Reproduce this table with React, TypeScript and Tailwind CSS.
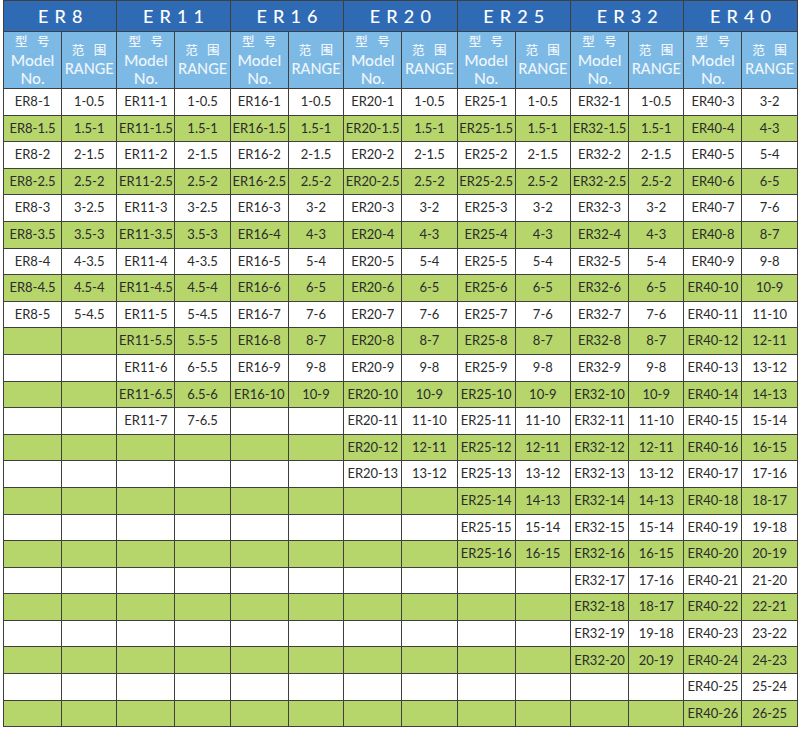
import React from "react";

// Collet groups and their nominal sizes
type Group = { name: string; sizes: number[]; fineStep: boolean };

const range = (from: number, to: number) =>
  Array.from({ length: to - from + 1 }, (_, i) => from + i);

const GROUPS: Group[] = [
  { name: "ER8", sizes: [1, 1.5, 2, 2.5, 3, 3.5, 4, 4.5, 5], fineStep: true },
  { name: "ER11", sizes: [1, 1.5, 2, 2.5, 3, 3.5, 4, 4.5, 5, 5.5, 6, 6.5, 7], fineStep: true },
  { name: "ER16", sizes: [1, 1.5, 2, 2.5, ...range(3, 10)], fineStep: false },
  { name: "ER20", sizes: [1, 1.5, 2, 2.5, ...range(3, 13)], fineStep: false },
  { name: "ER25", sizes: [1, 1.5, 2, 2.5, ...range(3, 16)], fineStep: false },
  { name: "ER32", sizes: [1, 1.5, 2, 2.5, ...range(3, 20)], fineStep: false },
  { name: "ER40", sizes: range(3, 26), fineStep: false },
];

const ROWS = 24;

function lower(size: number, fineStep: boolean) {
  if (fineStep || size < 3) return size - 0.5;
  return size - 1;
}

const border = "border border-[#3f3f3f]";

export default function App() {
  return (
    <div className="h-[729px] w-[800px] bg-white pl-[3px] font-['Lato','Noto_Sans_CJK_SC',sans-serif]">
      <table className="w-[794px] table-fixed border-collapse text-center">
        <colgroup>
          {GROUPS.map((g) => (
            <React.Fragment key={g.name}>
              <col className="w-[58px]" />
              <col className="w-[55.4px]" />
            </React.Fragment>
          ))}
        </colgroup>
        <thead>
          <tr className="h-[31px] bg-[#2f6bb5]">
            {GROUPS.map((g) => (
              <th
                key={g.name}
                colSpan={2}
                className={`${border} pl-[6px] text-[18px] font-medium tracking-[0.34em] text-white`}
              >
                {g.name}
              </th>
            ))}
          </tr>
          <tr className="h-[57px] bg-[#7db9e5] text-[#eef6fc]">
            {GROUPS.map((g) => (
              <React.Fragment key={g.name}>
                <th className={`${border} p-0 font-medium leading-[18px]`}>
                  <div className="pl-[9px] text-[12.5px] tracking-[0.75em]">型号</div>
                  <div className="text-[15.5px]">Model</div>
                  <div className="text-[15.5px]">No.</div>
                </th>
                <th className={`${border} p-0 font-medium leading-[18px]`}>
                  <div className="pl-[9px] text-[12.5px] tracking-[0.75em]">范围</div>
                  <div className="text-[14.5px]">RANGE</div>
                </th>
              </React.Fragment>
            ))}
          </tr>
        </thead>
        <tbody className="text-[13px] text-[#2b2b2b]">
          {Array.from({ length: ROWS }, (_, r) => (
            <tr
              key={r}
              className={`h-[26.6px] ${r % 2 === 1 ? "bg-[#b6d56b]" : "bg-white"}`}
            >
              {GROUPS.map((g) => {
                const s = g.sizes[r];
                return (
                  <React.Fragment key={g.name}>
                    <td className={`${border} p-0 whitespace-nowrap`}>
                      {s !== undefined ? `${g.name}-${s}` : ""}
                    </td>
                    <td className={`${border} p-0 whitespace-nowrap`}>
                      {s !== undefined ? `${s}-${lower(s, g.fineStep)}` : ""}
                    </td>
                  </React.Fragment>
                );
              })}
            </tr>
          ))}
        </tbody>
      </table>
    </div>
  );
}
